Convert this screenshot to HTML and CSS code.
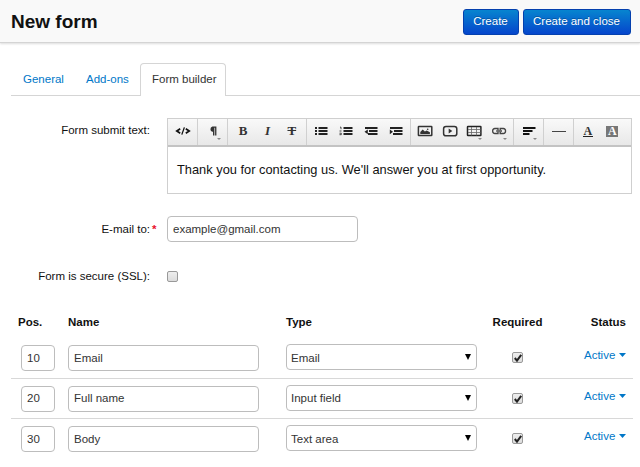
FILE: index.html
```html
<!DOCTYPE html>
<html lang="en">
<head>
<meta charset="utf-8">
<title>New form</title>
<link rel="stylesheet" href="styles.css">
</head>
<body>
<header class="header">
  <h1 class="title">New form</h1>
  <button class="btn">Create</button>
  <button class="btn btn-wide">Create and close</button>
</header>
<nav class="tabs">
  <a class="tab tab-general">General</a>
  <a class="tab tab-addons">Add-ons</a>
  <a class="tab tab-active">Form builder</a>
</nav>
<main>
  <div class="field field-editor">
    <span class="label">Form submit text:</span>
    <div class="editor">
      <div class="toolbar">
        <div class="group single">
          <svg class="ico" viewBox="0 0 16 14"><path d="M5.2 4.8 1.8 7 5.2 9.2M10.8 4.8 14.2 7 10.8 9.2" stroke="#111" stroke-width="1.7" fill="none"/><path d="M9.4 3.4 6.8 10.6" stroke="#111" stroke-width="1.3"/></svg>
        </div>
        <div class="group single">
          <svg class="ico" viewBox="0 0 16 14"><path d="M11.4 2.6H7.4a2.7 2.7 0 0 0 0 5.2H8V11.4h1.4V3.8h.7v7.6h1.3z" fill="#333"/></svg><i class="more"></i>
        </div>
        <div class="group text-group">
          <span class="glyph">B</span><span class="glyph italic">I</span><span class="glyph strike">T</span>
        </div>
        <div class="group list-group">
          <svg class="ico" viewBox="0 0 16 14"><path d="M5.5 4h9M5.5 7h9M5.5 10h9" stroke="#222" stroke-width="1.8"/><path d="M2 4h2M2 7h2M2 10h2" stroke="#222" stroke-width="1.8"/></svg>
          <svg class="ico" viewBox="0 0 16 14"><path d="M5.5 4h9M5.5 7h9M5.5 10h9" stroke="#222" stroke-width="1.8"/><path d="M2 3.2h1v2M1.5 7h2M1.5 9.2h1.8v1.5H1.5" stroke="#444" stroke-width="1" fill="none"/></svg>
          <svg class="ico" viewBox="0 0 16 14"><path d="M2 4h12.5M6 7h8.5M5 10h9.5" stroke="#222" stroke-width="1.8"/><path d="M1.5 7.8 4.8 5.4v4.8z" fill="#222"/></svg>
          <svg class="ico" viewBox="0 0 16 14"><path d="M2 4h12.5M6 7h8.5M5 10h9.5" stroke="#222" stroke-width="1.8"/><path d="M5 7.8 1.8 5.4v4.8z" fill="#222"/></svg>
        </div>
        <div class="group media-group">
          <svg class="ico" viewBox="0 0 16 14"><rect x="1.4" y="2.5" width="13.4" height="9" rx=".5" fill="none" stroke="#333" stroke-width="1.5"/><path d="M3.3 9.9V8l2.4-2.4 2.2 1.9 1.8-1 3.2 1.7v1.7z" fill="#333"/><circle cx="10.7" cy="5.3" r=".8" fill="#333"/></svg>
          <svg class="ico" viewBox="0 0 16 14"><rect x="1.6" y="2.4" width="13.2" height="9.4" rx="2.4" fill="none" stroke="#333" stroke-width="1.5"/><path d="M6.7 4.6 10.3 7 6.7 9.4z" fill="#333"/></svg>
          <span class="slot"><svg class="ico" viewBox="0 0 16 14"><rect x="1.5" y="2.5" width="13.4" height="9" rx=".5" fill="none" stroke="#222" stroke-width="1.5"/><path d="M2 5.5h12.5M2 8.5h12.5M5.5 3v8.5M10.5 3v8.5" stroke="#666" stroke-width=".8"/></svg><i class="more"></i></span>
          <span class="slot"><svg class="ico" viewBox="0 0 16 14"><path d="M7 5.9V4.5H3.9A2.2 2.2 0 0 0 1.7 7a2.2 2.2 0 0 0 2.2 2.5H7V8.1M9.2 5.9V4.5h3.1A2.2 2.2 0 0 1 14.5 7a2.2 2.2 0 0 1-2.2 2.5H9.2V8.1M5.2 7H11" fill="none" stroke="#444" stroke-width="1.4"/></svg><i class="more"></i></span>
        </div>
        <div class="group single">
          <svg class="ico" viewBox="0 0 16 14"><path d="M2 4h12.5M2 7h9.5M2 10h6.5" stroke="#111" stroke-width="1.8"/></svg><i class="more"></i>
        </div>
        <div class="group single">
          <svg class="ico" viewBox="0 0 16 14"><path d="M1 7.5h14" stroke="#444" stroke-width="1"/></svg>
        </div>
        <div class="group color-group">
          <span class="letter under">A</span><span class="letter filled">A</span>
        </div>
      </div>
      <div class="content">Thank you for contacting us. We'll answer you at first opportunity.</div>
    </div>
  </div>
  <div class="field field-mail">
    <span class="label">E-mail to:<b class="star">*</b></span>
    <input class="input" type="text" value="example@gmail.com">
  </div>
  <div class="field field-ssl">
    <span class="label">Form is secure (SSL):</span>
    <span class="check"></span>
  </div>
  <section class="grid">
    <div class="row head">
      <span class="head-pos">Pos.</span><span>Name</span><span>Type</span><span class="center">Required</span><span class="right">Status</span>
    </div>
    <div class="row">
      <input class="input pos" value="10"><input class="input" value="Email">
      <span class="select">Email<svg viewBox="0 0 6 6"><path d="M0 0h6L3 6z"/></svg></span>
      <span class="center"><span class="check"><svg viewBox="0 0 10 10"><path d="M1.8 5 4 7.7 8.2 1.8" fill="none" stroke="#222" stroke-width="2"/></svg></span></span>
      <a class="status">Active<svg class="caret" viewBox="0 0 7 4"><path d="M0 0h7L3.5 4z"/></svg></a>
    </div>
    <div class="row">
      <input class="input pos" value="20"><input class="input" value="Full name">
      <span class="select">Input field<svg viewBox="0 0 6 6"><path d="M0 0h6L3 6z"/></svg></span>
      <span class="center"><span class="check"><svg viewBox="0 0 10 10"><path d="M1.8 5 4 7.7 8.2 1.8" fill="none" stroke="#222" stroke-width="2"/></svg></span></span>
      <a class="status">Active<svg class="caret" viewBox="0 0 7 4"><path d="M0 0h7L3.5 4z"/></svg></a>
    </div>
    <div class="row last">
      <input class="input pos" value="30"><input class="input" value="Body">
      <span class="select">Text area<svg viewBox="0 0 6 6"><path d="M0 0h6L3 6z"/></svg></span>
      <span class="center"><span class="check"><svg viewBox="0 0 10 10"><path d="M1.8 5 4 7.7 8.2 1.8" fill="none" stroke="#222" stroke-width="2"/></svg></span></span>
      <a class="status">Active<svg class="caret" viewBox="0 0 7 4"><path d="M0 0h7L3.5 4z"/></svg></a>
    </div>
  </section>
</main>
</body>
</html>
```
FILE: styles.css
```css
* { box-sizing: border-box; }
body {
  margin: 0;
  height: 467px;
  overflow: hidden;
  background: #fff;
  color: #111;
  font: 11.5px/16px "Liberation Sans", Arial, sans-serif;
}
.header {
  display: flex;
  align-items: center;
  height: 43px;
  padding: 1px 9.5px 0 11px;
  background: #f9f9f9;
  border-bottom: 1px solid #d4d4d4;
  box-shadow: 0 1px 2px #ddd;
}
.title { margin: 0 auto 0 0; font-size: 19px; line-height: 24px; }
.btn {
  width: 56px;
  height: 26px;
  padding: 0 0 1px;
  margin-left: 4px;
  border: 1px solid #0440ae;
  border-radius: 3px;
  background: linear-gradient(#0785cf, #0545cc);
  color: #fff;
  font: 11.5px/16px "Liberation Sans", Arial, sans-serif;
  text-shadow: 0 -1px 0 rgba(0, 0, 0, .25);
}
.btn-wide { width: 108px; }
.tabs {
  display: flex;
  height: 33px;
  margin: 20px 0 0 11px;
  box-shadow: inset 0 -1px #d5d5d5;
}
.tab { padding: 8px 0 0 12px; color: #0077c8; }
.tab-general { width: 63px; }
.tab-addons { width: 66px; }
.tab-active {
  width: 86px;
  padding: 7px 0 0 11px;
  border: 1px solid #d5d5d5;
  border-bottom: 0;
  border-radius: 4px 4px 0 0;
  background: #fff;
  color: #333;
}
.field { display: flex; }
.label { position: relative; width: 150px; margin-right: 17px; text-align: right; }
.star { position: absolute; left: 152px; top: 0; color: #e8112d; }
.field-editor { margin-top: 22px; }
.field-editor .label { padding-top: 4px; }
.editor { width: 465px; height: 76px; border: 1px solid #cfcfcf; }
.toolbar {
  display: flex;
  height: 28px;
  background: linear-gradient(#f9f9f9, #e8e8e8);
  border-bottom: 2px solid #c3c3c3;
}
.group {
  position: relative;
  display: flex;
  align-items: center;
  justify-content: space-around;
  border-right: 1px solid #d0d0d0;
  padding: 0 2px 2px;
}
.single { width: 30px; }
.text-group { width: 79px; padding-left: 3px; }
.list-group { width: 104px; }
.media-group { width: 103px; }
.color-group { flex: 1; border-right: 0; padding-right: 6px; }
.ico { display: block; width: 16px; height: 14px; flex: none; }
.slot { position: relative; }
.more {
  position: absolute;
  right: 6px;
  bottom: 5px;
  border: 2px solid transparent;
  border-top-color: #888;
  border-bottom: 0;
}
.slot .more { right: 0; bottom: -2px; }
.glyph {
  width: 14px;
  text-align: center;
  color: #333;
  font: bold 13px/14px "Liberation Serif", serif;
}
.italic { font-style: italic; }
.strike { text-decoration: line-through; }
.letter { width: 10px; text-align: center; font: bold 12px/10px "Liberation Serif", serif; color: #333; }
.under { border-bottom: 1px solid #222; }
.filled { width: 12px; height: 11px; line-height: 11px; background: #777; color: #fff; }
.content { padding: 15px 9px; font-size: 12.83px; white-space: nowrap; }
.field-mail { margin-top: 22px; align-items: center; }
.field-mail .label { margin-top: -1px; }
.input, .select {
  width: 191px;
  height: 26px;
  padding: 0 5px;
  border: 1px solid #bdbdbd;
  border-radius: 4px;
  background: #fff;
  color: #333;
  font: 11.5px/16px "Liberation Sans", Arial, sans-serif;
}
.field-mail .input { padding-bottom: 1px; }
.field-ssl { margin-top: 26px; align-items: center; }
.check {
  display: inline-block;
  width: 11px;
  height: 11px;
  border: 1px solid #999;
  border-radius: 2px;
  background: linear-gradient(#eee, #dcdcdc);
}
.check svg { display: block; width: 10px; height: 10px; }
.grid { width: 622px; margin: 30px 0 0 11px; }
.row {
  display: grid;
  grid-template-columns: 57px 218px 191px 80px 1fr;
  height: 40.6px;
  padding-top: 7px;
  border-bottom: 1px solid #d8d8d8;
}
.last { border-bottom: 0; }
.head {
  height: 24px;
  padding-top: 0;
  border: 0;
  font-weight: bold;
}
.head-pos { padding-left: 7px; }
.row .input { padding-bottom: 1px; }
.row .pos { width: 34px; margin-left: 10px; }
.select {
  display: flex;
  align-items: center;
  justify-content: space-between;
  margin-top: -1px;
  padding: 1px 5px 0 4px;
}
.select svg { width: 6px; height: 6px; margin-bottom: 1px; }
.center { text-align: center; }
.row .center { padding-left: 1px; }
.row:not(.head) .center { padding-top: 6px; }
.right { text-align: right; padding-right: 7px; }
.status { display: flex; padding: 2px 0 0 27px; color: #0077c8; }
.caret { width: 7px; height: 4px; margin: 6px 0 0 4px; fill: #0077c8; }
```
